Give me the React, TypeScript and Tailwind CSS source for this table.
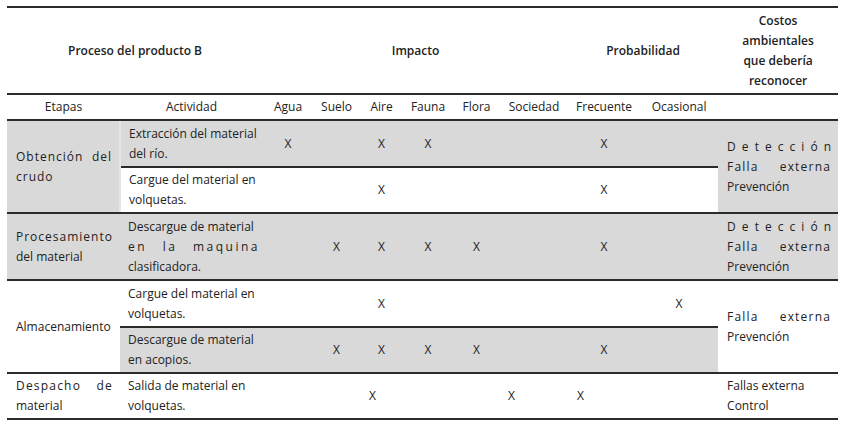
import React from 'react';

const GRAY = 'bg-[#d9d9d9]';
const LINE = 'border-b-2 border-[#2b2b2b]';

// a justified line whose words (or letters) are pushed to both edges
const Spread = ({ parts, className = '' }: { parts: string[]; className?: string }) => (
  <div className={`flex justify-between ${className}`}>
    {parts.map((p, i) => (
      <span key={i} className={i === parts.length - 1 ? 'mr-[-1px]' : ''}>
        {p}
      </span>
    ))}
  </div>
);

const X = () => <span>X</span>;

// 8 marker columns: Agua, Suelo, Aire, Fauna, Flora, Sociedad, Frecuente, Ocasional
const Marks = ({ on, gray, line }: { on: number[]; gray?: boolean; line?: boolean }) => (
  <>
    {[0, 1, 2, 3, 4, 5, 6, 7].map((i) => (
      <td key={i} className={`text-center align-middle ${gray ? GRAY : ''} ${line ? LINE : ''}`}>
        {on.includes(i) ? <X /> : null}
      </td>
    ))}
  </>
);

const Act = ({ children, gray, line }: { children: React.ReactNode; gray?: boolean; line?: boolean }) => (
  <td className={`pl-2 pr-1 align-middle text-left whitespace-nowrap ${gray ? GRAY : ''} ${line ? LINE : ''}`}>{children}</td>
);

export default function App() {
  return (
    <div className="w-[863px] h-[429px] bg-white pt-[6px] pl-[7px] text-[12px] leading-[20px] text-[#222]" style={{ fontFamily: '"Open Sans", sans-serif' }}>
      <table className="w-[831px] table-fixed border-collapse">
        <colgroup>
          <col className="w-[113px]" />
          <col className="w-[143px]" />
          <col className="w-[50px]" />
          <col className="w-[47px]" />
          <col className="w-[43px]" />
          <col className="w-[50px]" />
          <col className="w-[47px]" />
          <col className="w-[68px]" />
          <col className="w-[72px]" />
          <col className="w-[78px]" />
          <col className="w-[120px]" />
        </colgroup>
        <tbody>
          <tr className="h-[87px] border-t-2 border-[#2b2b2b] font-semibold">
            <td colSpan={2} className={`text-center ${LINE}`}>Proceso del producto B</td>
            <td colSpan={6} className={`text-center ${LINE}`}>Impacto</td>
            <td colSpan={2} className={`text-center ${LINE}`}>Probabilidad</td>
            <td className={`text-center ${LINE}`}>
              Costos
              <br />
              ambientales
              <br />
              que debería
              <br />
              reconocer
            </td>
          </tr>
          <tr className="h-[26px] text-center">
            <td className={LINE}>Etapas</td>
            <td className={LINE}>Actividad</td>
            <td className={LINE}>Agua</td>
            <td className={LINE}>Suelo</td>
            <td className={LINE}>Aire</td>
            <td className={LINE}>Fauna</td>
            <td className={LINE}>Flora</td>
            <td className={LINE}>Sociedad</td>
            <td className={LINE}>Frecuente</td>
            <td className={LINE}>Ocasional</td>
            <td className={LINE}></td>
          </tr>

          {/* Obtención del crudo */}
          <tr className="h-[47px]">
            <td rowSpan={2} className={`pl-[9px] pr-2 align-middle ${GRAY} ${LINE} border-r-2 border-r-[#e6e6e6]`}>
              <Spread parts={['Obtención', 'del']} className="tracking-[1px]" />
              <div className="tracking-[1px]">crudo</div>
            </td>
            <Act gray line>
              Extracción del material
              <br />
              del río.
            </Act>
            <Marks on={[0, 2, 3, 6]} gray line />
            <td rowSpan={2} className={`pl-[9px] pr-2 align-middle ${GRAY} ${LINE}`}>
              <Spread parts={'Detección'.split('')} />
              <Spread parts={['Falla', 'externa']} className="tracking-[1.2px]" />
              <div>Prevención</div>
            </td>
          </tr>
          <tr className="h-[46px]">
            <Act line>
              Cargue del material en
              <br />
              volquetas.
            </Act>
            <Marks on={[2, 6]} line />
          </tr>

          {/* Procesamiento del material */}
          <tr className={`h-[67px] ${GRAY}`}>
            <td className={`pl-[9px] pr-2 align-middle ${LINE}`}>
              <div className="tracking-[1px]">Procesamiento</div>
              <div>del material</div>
            </td>
            <Act line>
              <div>Descargue de material</div>
              <Spread parts={['en', 'la', 'maquina']} className="tracking-[2.5px]" />
              <div>clasificadora.</div>
            </Act>
            <Marks on={[1, 2, 3, 4, 6]} line />
            <td className={`pl-[9px] pr-2 align-middle ${LINE}`}>
              <Spread parts={'Detección'.split('')} />
              <Spread parts={['Falla', 'externa']} className="tracking-[1.2px]" />
              <div>Prevención</div>
            </td>
          </tr>

          {/* Almacenamiento */}
          <tr className="h-[47px]">
            <td rowSpan={2} className={`pl-[9px] pr-2 align-middle ${LINE}`}>
              Almacenamiento
            </td>
            <Act line>
              Cargue del material en
              <br />
              volquetas.
            </Act>
            <Marks on={[2, 7]} line />
            <td rowSpan={2} className={`pl-[9px] pr-2 align-middle ${LINE}`}>
              <Spread parts={['Falla', 'externa']} className="tracking-[1.2px]" />
              <div>Prevención</div>
            </td>
          </tr>
          <tr className="h-[46px]">
            <Act gray line>
              Descargue de material
              <br />
              en acopios.
            </Act>
            <Marks on={[1, 2, 3, 4, 6]} gray line />
          </tr>

          {/* Despacho de material */}
          <tr className="h-[46px]">
            <td className={`pl-[9px] pr-2 align-middle ${LINE}`}>
              <Spread parts={['Despacho', 'de']} className="tracking-[1.2px]" />
              <div>material</div>
            </td>
            <Act line>
              Salida de material en
              <br />
              volquetas.
            </Act>
            <td className={LINE}></td>
            <td className={LINE}></td>
            <td className={`pl-[9px] text-left ${LINE}`}>
              <X />
            </td>
            <td className={LINE}></td>
            <td className={LINE}></td>
            <td className={`pl-[8px] text-left ${LINE}`}>
              <X />
            </td>
            <td className={`pl-[9px] text-left ${LINE}`}>
              <X />
            </td>
            <td className={LINE}></td>
            <td className={`pl-[9px] pr-2 align-middle ${LINE}`}>
              Fallas externa
              <br />
              Control
            </td>
          </tr>
        </tbody>
      </table>
    </div>
  );
}
